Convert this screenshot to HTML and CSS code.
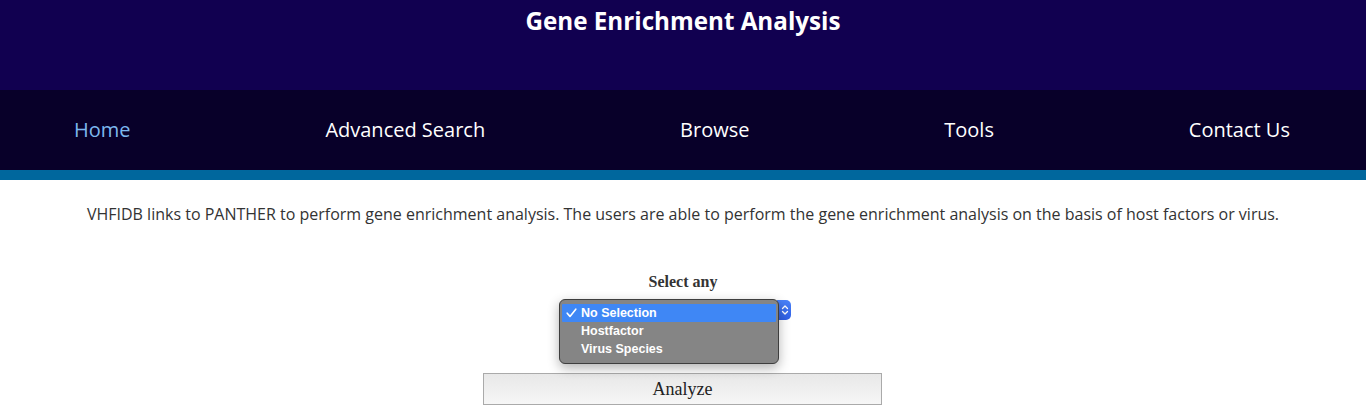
FILE: index.html
```html
<!DOCTYPE html>
<html>
<head>
<meta charset="utf-8">
<title>Gene Enrichment Analysis</title>
<link rel="stylesheet" href="styles.css">
</head>
<body>
<header class="banner">
  <h1 class="banner-title">Gene Enrichment Analysis</h1>
</header>
<nav class="nav">
  <a class="nav-link active" href="#">Home</a>
  <a class="nav-link" href="#">Advanced Search</a>
  <a class="nav-link" href="#">Browse</a>
  <a class="nav-link" href="#">Tools</a>
  <a class="nav-link" href="#">Contact Us</a>
</nav>
<div class="stripe"></div>
<main class="content">
  <p class="intro">VHFIDB links to PANTHER to perform gene enrichment analysis. The users are able to perform the gene enrichment analysis on the basis of host factors or virus.</p>
  <form class="form">
    <label class="form-label">Select any</label>
    <div class="select">
      <div class="select-stepper">
        <svg width="8" height="12" viewBox="0 0 8 12"><path d="M1.5 4.5 L4 2 L6.5 4.5 M1.5 7.5 L4 10 L6.5 7.5" fill="none" stroke="#fff" stroke-width="1.3" stroke-linecap="round" stroke-linejoin="round"/></svg>
      </div>
      <ul class="select-menu">
        <li class="select-option selected"><svg class="check" width="11" height="10" viewBox="0 0 11 10"><path d="M1.2 5.2 L4 8.4 L9.8 1.2" fill="none" stroke="#fff" stroke-width="1.6" stroke-linecap="round" stroke-linejoin="round"/></svg>No Selection</li>
        <li class="select-option">Hostfactor</li>
        <li class="select-option">Virus Species</li>
      </ul>
    </div>
    <button class="analyze" type="button">Analyze</button>
  </form>
</main>
</body>
</html>
```
FILE: styles.css
```css
html, body {
  margin: 0;
  padding: 0;
  background: #fff;
}
body {
  font-family: "Open Sans", "DejaVu Sans", sans-serif;
}
.banner {
  background: #110050;
  height: 90px;
  box-sizing: border-box;
  padding-top: 5px;
}
.banner-title {
  margin: 0;
  color: #fff;
  font-size: 24.2px;
  font-weight: 700;
  line-height: 32px;
  text-align: center;
}
.nav {
  background: #080029;
  height: 80px;
  display: flex;
  align-items: center;
  justify-content: space-between;
  padding: 0 76px 0 74px;
}
.nav-link {
  color: #fff;
  text-decoration: none;
  font-size: 20px;
  line-height: 28px;
}
.nav-link.active {
  color: #7db8ee;
}
.stripe {
  height: 10px;
  background: #00679d;
}
.content {
  text-align: center;
}
.intro {
  margin: 23px 0 0;
  font-size: 16px;
  line-height: 22px;
  color: #333;
}
.form {
  display: flex;
  flex-direction: column;
  align-items: center;
  margin-top: 48px;
}
.form-label {
  font-family: "Liberation Serif", "Times New Roman", serif;
  font-weight: 700;
  font-size: 16px;
  line-height: 18px;
  color: #333;
}
.select {
  position: relative;
  width: 231px;
  height: 20px;
  margin-top: 9px;
  margin-right: 15px;
  display: flex;
  justify-content: flex-end;
}
.select-stepper {
  width: 14px;
  height: 20px;
  background: linear-gradient(#4a82f8, #2f5fe6);
  border-radius: 0 5px 5px 0;
  display: flex;
  align-items: center;
  justify-content: center;
  padding-left: 2px;
  box-sizing: border-box;
}
.select-menu {
  position: absolute;
  left: -1px;
  top: -1px;
  width: 220px;
  box-sizing: border-box;
  margin: 0;
  padding: 4px 2px 5px;
  list-style: none;
  background: #858585;
  border: 1px solid #3e3e3e;
  border-radius: 6px;
  box-shadow: 0 4px 12px rgba(0, 0, 0, 0.3);
  text-align: left;
}
.select-option {
  position: relative;
  height: 18px;
  line-height: 18px;
  padding-left: 19px;
  font-family: "Liberation Sans", Arial, sans-serif;
  font-weight: 700;
  font-size: 12.5px;
  color: #fff;
}
.select-option.selected {
  background: #3f87f5;
  border-radius: 1px;
}
.check {
  position: absolute;
  left: 4px;
  top: 4px;
}
.analyze {
  margin-top: 53px;
  margin-right: 1px;
  width: 399px;
  height: 32px;
  border: 1px solid #aaa;
  background: linear-gradient(#e8e8e8, #f6f6f6);
  font-family: "Liberation Serif", "Times New Roman", serif;
  font-size: 18px;
  color: #222;
  padding: 0;
}
```
